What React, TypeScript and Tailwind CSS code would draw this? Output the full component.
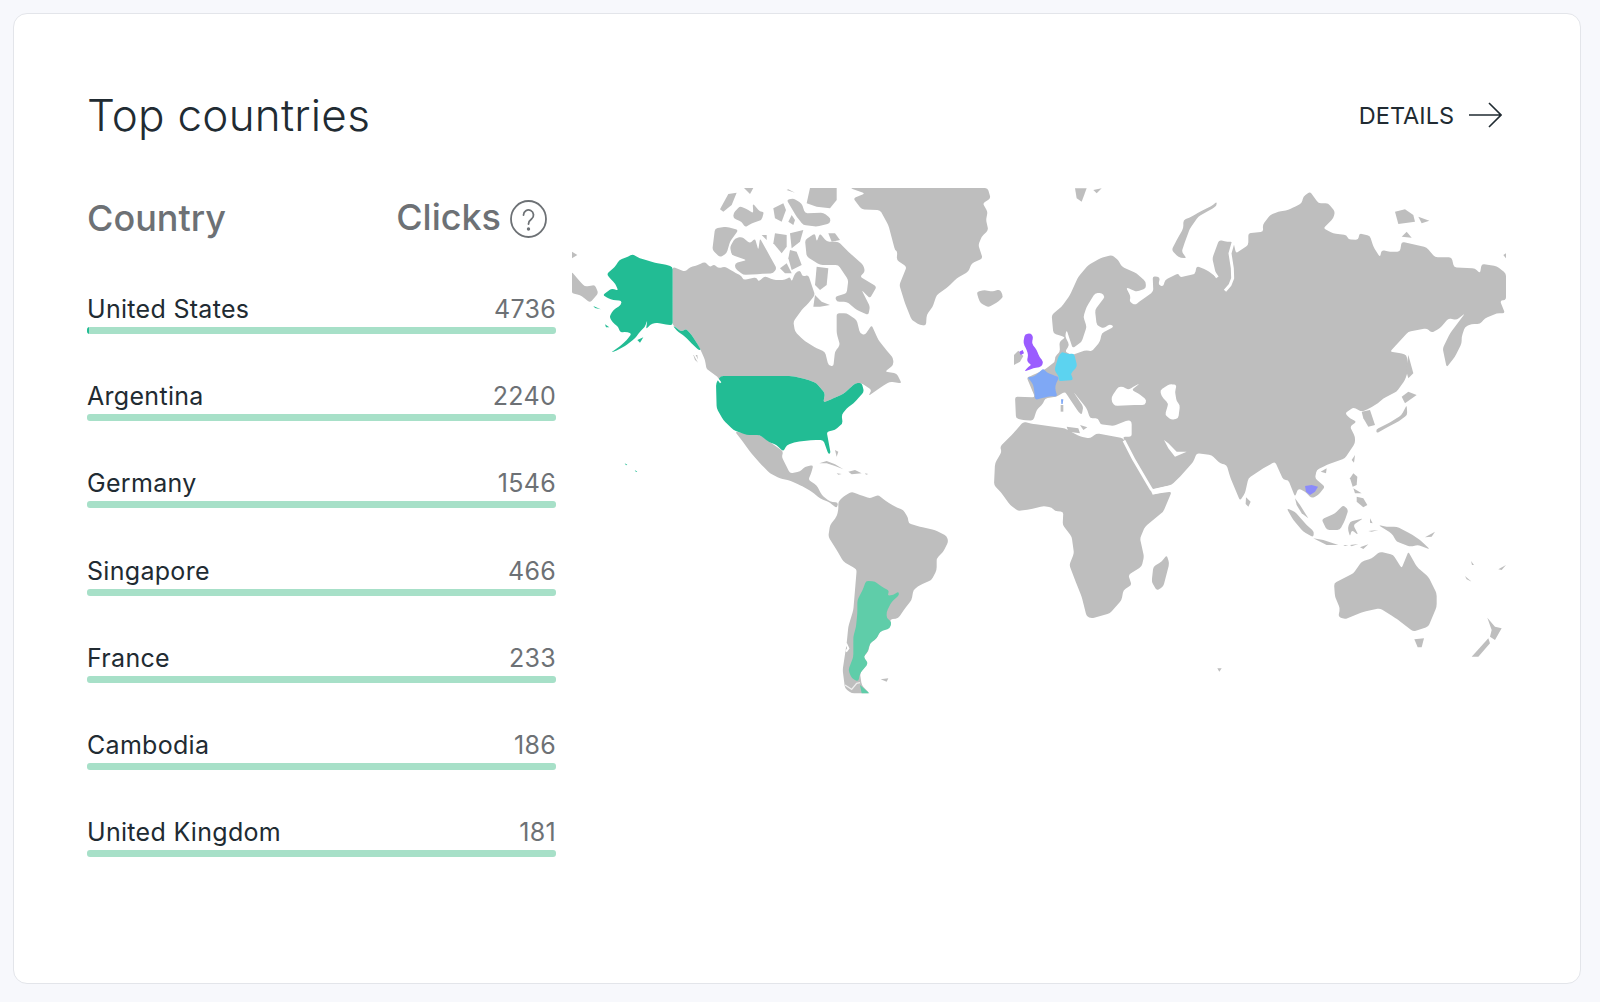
// App.tsx
const GRAY = '#bebebe';
const rows = [
	{ name: 'United States', clicks: 4736 },
	{ name: 'Argentina', clicks: 2240 },
	{ name: 'Germany', clicks: 1546 },
	{ name: 'Singapore', clicks: 466 },
	{ name: 'France', clicks: 233 },
	{ name: 'Cambodia', clicks: 186 },
	{ name: 'United Kingdom', clicks: 181 },
];

// Outline points are traced at 3x, in frames anchored on the page
const west = 'translate(560 170) scale(0.33333)';
const east = 'translate(1000 170) scale(0.33333)';
const south = 'translate(780 430) scale(0.33333)';
const oceania = 'translate(1180 430) scale(0.33333)';

const westGray = [
	'338,290 375,305 390,292 415,285 435,275 450,292 462,282 475,295 495,290 520,305 545,318 550,330 590,322 595,335 615,318 640,330 675,330 690,320 695,335 705,310 720,300 728,320 745,315 755,345 765,375 745,400 725,420 700,455 705,485 730,510 770,535 795,545 805,585 820,590 825,545 840,525 830,490 830,430 860,430 890,450 900,490 915,495 935,465 955,510 975,535 1000,565 1000,585 975,605 1010,610 1025,640 990,635 965,650 925,678 935,660 905,640 885,640 850,672 820,685 790,698 795,670 770,640 740,628 695,618 482,618 480,635 470,620 440,600 435,570 422,540 410,518 395,495 378,476 365,485 338,466',
	'400,555 412,555 415,578 405,570',
	'1250,365 1275,360 1295,365 1320,358 1330,380 1315,395 1285,412 1262,400 1255,385',
	'870,54 1283,54 1292,85 1268,100 1283,125 1278,150 1285,180 1265,200 1255,225 1268,265 1235,280 1225,305 1190,325 1165,350 1130,375 1118,410 1100,435 1098,467 1080,465 1055,450 1035,400 1018,345 1040,290 1010,270 1012,245 1005,240 985,165 960,120 905,118 880,85 915,70',
	'480,118 505,72 530,68 515,105 490,125',
	'552,54 580,54 570,72',
	'685,58 705,68 680,60',
	'750,54 830,54 830,90 810,115 770,110 740,100',
	'520,130 540,108 565,120 580,130 578,100 600,125 612,125 605,150 575,160 555,172 545,155 520,145',
	'640,115 670,100 678,120 665,155 645,145',
	'680,90 700,85 725,100 735,130 790,128 812,145 810,160 770,170 730,165 710,140',
	'685,155 695,135 705,150 700,165',
	'465,175 500,170 535,180 510,215 500,250 480,262 457,240',
	'510,230 525,205 545,200 570,220 585,205 595,240 600,205 625,250 650,295 640,310 600,312 550,315 525,295 525,280 560,270 515,255',
	'605,195 620,195 620,210',
	'645,190 680,195 680,230 665,250 640,220',
	'690,190 730,180 720,215 695,235',
	'690,240 710,245 725,285 695,300 685,265',
	'660,295 680,280 695,310 675,310',
	'735,210 765,190 770,215 780,190 800,215 835,215 870,250 910,285 915,305 900,320 950,350 930,385 905,360 930,410 925,435 890,420 860,395 830,395 825,380 860,370 865,330 835,285 780,285 740,260',
	'805,190 825,190 840,210 815,215',
	'770,290 805,295 800,345 780,360 765,345',
	'765,375 785,395 810,405 780,410 760,410',
	'35,245 52,255 35,265',
	'35,305 60,335 75,350 105,345 115,370 90,398 60,375 35,370',
];
const westWhite = ['835,330 850,320 852,340 838,345'];
const westGreen = [
	'338,290 318,284 285,278 250,268 232,262 218,252 205,260 178,270 165,290 140,312 150,325 165,340 175,362 155,355 128,375 145,385 160,390 185,392 183,405 160,420 148,440 158,458 175,470 180,488 195,485 215,490 205,505 185,525 152,548 170,542 195,528 225,505 240,485 255,470 262,450 258,478 270,465 285,458 310,462 338,466',
	'338,466 365,485 378,476 395,495 410,518 423,540 415,540 395,520 375,500 350,482',
	'482,618 695,618 740,628 770,640 795,670 790,698 820,685 850,672 885,640 905,638 912,665 890,690 880,700 860,715 845,735 848,760 825,780 800,785 812,850 805,852 790,810 760,810 710,815 680,825 670,845 650,825 625,815 600,795 560,795 520,780 490,750 470,715 468,640',
	'100,408 122,418 105,414',
	'135,463 148,472 138,472',
	'232,510 250,502 240,518',
	'194,880 202,884 198,886',
	'224,900 232,905 228,906',
];

const southGray = [
	'-135,5 -60,15 10,65 5,80 15,100 30,130 60,125 75,110 100,105 95,125 85,150 110,165 125,195 150,215 175,218 170,235 150,218 120,205 95,185 60,165 30,152 0,145 -30,130 -60,100 -90,65 -115,30',
	'118,100 140,93 165,103 190,118 165,108 140,100',
	'205,125 225,120 245,130 215,133',
	'255,130 265,132 258,134',
	'170,130 185,132 175,134',
	'165,60 175,65 170,80',
	'175,215 190,200 215,185 240,195 270,205 295,195 320,215 345,230 370,240 385,265 385,280 420,290 465,300 500,318 505,335 490,365 470,385 470,420 455,450 420,465 400,480 395,510 375,535 355,565 330,568 332,590 300,605 290,625 270,640 265,665 250,680 262,700 240,730 245,765 268,790 215,790 195,775 188,720 200,640 205,590 220,540 230,420 225,415 190,395 170,360 145,320 150,285 170,260 175,240',
	'302,748 325,745 320,755',
	'660,50 700,10 730,-25 760,-18 855,-5 900,20 930,25 950,10 1030,25 1060,85 1112,178 1120,192 1175,185 1150,245 1095,290 1080,325 1092,380 1085,410 1045,435 1055,465 1030,480 1025,510 990,550 935,565 920,560 905,500 885,450 868,405 882,370 875,320 848,285 850,245 825,243 815,232 790,228 750,238 715,243 690,225 665,190 642,165 645,100 665,65',
	'1160,375 1168,400 1150,470 1130,482 1115,455 1120,410 1145,395',
];
const southWhite = [
	'1152,30 1165,55 1185,80 1220,65 1190,65 1165,40',
	'1112,180 1175,165 1175,180 1118,194',
];

const eastGray = [
	'155,435 185,410 210,375 235,320 265,285 300,265 335,255 355,270 365,290 410,310 437,335 438,355 410,365 378,352 392,380 388,395 405,405 425,390 460,365 458,318 480,322 475,345 490,350 495,330 535,310 540,322 585,312 590,288 620,300 650,322 637,265 657,210 682,215 700,215 708,250 745,225 745,190 790,185 788,165 810,135 835,125 865,120 885,110 905,100 910,80 930,65 945,85 955,100 985,100 1005,125 1000,145 970,175 1000,190 1040,195 1045,208 1075,210 1078,190 1110,198 1120,230 1140,262 1145,240 1170,245 1200,245 1205,215 1280,232 1305,262 1355,262 1362,292 1425,295 1440,310 1445,282 1490,288 1518,310 1518,390 1500,392 1515,430 1490,430 1455,445 1440,462 1415,462 1395,470 1385,500 1385,520 1365,560 1340,592 1328,535 1350,490 1395,430 1370,450 1345,445 1320,475 1295,488 1280,475 1225,485 1170,545 1205,550 1220,555 1225,600 1215,630 1190,665 1150,685 1140,695 1110,715 1085,725 1060,712 1035,730 1050,745 1070,755 1050,770 1065,800 1065,820 1035,865 980,885 950,900 945,925 975,950 955,975 935,985 915,965 895,955 885,980 865,930 850,930 825,875 790,895 745,925 735,970 720,992 690,920 680,885 660,880 635,855 590,850 580,875 540,920 515,945 455,958 400,860 368,800 395,800 395,755 385,750 340,768 300,762 295,745 270,745 260,715 220,665 250,710 245,735 235,725 205,680 195,665 170,680 135,685 130,700 110,720 100,752 70,750 48,745 45,680 105,682 80,622 100,615 135,598 165,575 165,560 180,545 178,515 195,503 190,500 160,490',
	'650,95 640,105 600,125 575,140 550,150 550,175 530,210 515,240 535,262 560,265 545,245 555,215 570,175 595,140 630,120 650,108',
	'225,55 260,55 245,95 230,85',
	'280,60 305,55 290,70',
	'1185,125 1215,118 1240,135 1245,155 1195,162',
	'1255,140 1288,152 1265,160',
	'1205,200 1220,185 1235,203',
	'1510,255 1518,250 1518,265',
	'55,542 70,558 60,575 42,585 42,555',
	'182,705 190,705 190,725 182,725',
	'1220,705 1222,735 1195,755 1165,770 1130,790 1128,778 1165,760 1205,735',
	'1205,680 1225,665 1250,675 1215,700',
	'1225,555 1240,610 1225,625 1218,600',
	'1085,725 1110,720 1125,765 1105,770 1090,745',
	'240,765 262,772 250,780',
	'200,770 235,775 240,790 205,785',
];
const eastWhite = [
	'200,480 218,535 245,515 260,470 250,440 260,410 285,370 305,368 315,380 285,420 290,465 310,475 330,462 342,470 305,490 300,515 275,545 260,540 215,555 195,545 208,525 195,498',
	'335,680 355,650 370,650 385,660 400,650 420,640 395,660 415,670 440,690 435,705 395,705 345,708 335,695',
	'480,660 510,642 530,645 525,665 530,695 540,705 535,745 515,750 495,735 505,700 485,680',
];
const eastInlets = [
	'700,215 690,250 697,295 698,325 690,345 675,362',
	'652,322 637,300',
	'372,812 400,866 455,960',
];

const oceaniaGray = [
	'198,202 212,215 205,230 197,222',
	'345,205 360,225 385,265 365,250 350,225',
	'320,235 345,245 380,285 402,305 400,322 370,305 340,270',
	'400,325 430,330 475,345 440,345',
	'425,268 465,250 490,225 505,240 495,270 480,300 440,300',
	'510,275 550,265 520,285 535,315 515,300 510,320 503,295',
	'510,145 520,130 532,140 530,165 518,170',
	'530,200 550,205 562,225 550,232 530,215',
	'520,175 545,190 525,190',
	'515,90 525,75 522,98',
	'422,125 440,115 438,130',
	'595,285 620,290 650,290 690,310 720,330 750,358 715,345 690,350 650,335 635,310',
	'735,322 765,305 755,320',
	'490,345 505,345 495,348',
	'510,345 535,342 515,349',
	'540,352 565,343 550,357',
	'570,265 578,280 570,278',
	'565,303 595,300 575,305',
	'462,460 520,430 545,395 575,385 600,365 640,375 665,415 685,365 710,410 745,440 770,490 770,530 745,590 700,605 655,570 640,560 600,535 550,545 495,568 475,560 480,535 465,500',
	'703,628 732,625 725,652 713,652',
	'922,563 945,590 965,595 945,630 930,620 935,600',
	'925,625 930,640 895,680 875,680',
	'112,715 125,715 118,725',
	'855,438 875,455 860,448',
	'955,418 978,405 965,420',
	'873,393 882,405 876,405',
];

const argentina = [
	'258,452 285,455 305,470 328,482 322,497 340,495 355,484 358,495 335,515 320,545 320,565 335,575 330,595 300,605 290,625 270,640 262,668 250,680 265,700 240,730 235,755 215,745 205,720 220,680 220,620 228,590 232,550 232,510 248,480',
	'240,765 268,790 245,790',
];

// big outlines get their corners softened, tiny islands stay as they are
function Land({ points, fill }: { points: string; fill?: string }) {
	const pts = points.split(' ').map((p) => p.split(',').map(Number));
	if (pts.length < 7) return <polygon points={points} fill={fill} />;
	const cut = (a: number[], b: number[]) => {
		const d = Math.hypot(b[0] - a[0], b[1] - a[1]);
		const t = Math.min(8, d / 2) / d;
		return `${a[0] + (b[0] - a[0]) * t},${a[1] + (b[1] - a[1]) * t}`;
	};
	const d = pts
		.map((p, i) => {
			const prev = pts[(i + pts.length - 1) % pts.length];
			const next = pts[(i + 1) % pts.length];
			return `${i ? 'L' : 'M'}${cut(p, prev)}Q${p[0]},${p[1]} ${cut(p, next)}`;
		})
		.join('');
	return <path d={`${d}Z`} fill={fill} />;
}

function WorldMap() {
	return (
		<svg viewBox="572 188 935 506" className="ml-4 h-[506px] w-[935px] shrink-0">
			<g transform={west} fill={GRAY}>
				{westGray.map((p) => <Land key={p} points={p} />)}
				{westWhite.map((p) => <polygon key={p} points={p} fill="#fff" />)}
			</g>
			<g transform={south} fill={GRAY}>
				{southGray.map((p) => <Land key={p} points={p} />)}
			</g>
			<g transform={east} fill={GRAY}>
				{eastGray.map((p) => <Land key={p} points={p} />)}
				{eastWhite.map((p) => <Land key={p} points={p} fill="#fff" />)}
				{eastInlets.map((p) => <polyline key={p} points={p} fill="none" stroke="#fff" strokeWidth="9" />)}
			</g>
			<g transform={south} fill="#fff">
				{southWhite.map((p) => <polygon key={p} points={p} />)}
				<polyline points="195,765 215,778 230,760 240,758" fill="none" stroke="#eee" strokeWidth="4" />
				<polyline points="198,640 205,655 198,665" fill="none" stroke="#fff" strokeWidth="6" />
			</g>
			<g transform={oceania} fill={GRAY}>
				{oceaniaGray.map((p) => <Land key={p} points={p} />)}
			</g>
			<g transform={west} fill="#22bc94">
				{westGreen.map((p) => <Land key={p} points={p} />)}
				<polyline points="400,548 415,575 440,600 470,622 482,638" fill="none" stroke="#fff" strokeWidth="5" />
			</g>
			<g transform={south} fill="#5fcda9">
				{argentina.map((p) => <Land key={p} points={p} />)}
			</g>
			<g transform={east}>
				<Land fill="#9b5cff" points="75,492 92,490 100,500 95,520 110,540 118,560 130,575 125,590 100,595 72,605 85,590 95,585 80,575 85,555 80,540 70,520 72,505" />
				<polygon fill="#9b5cff" points="58,545 68,540 72,550 62,555" />
				<Land fill="#7fa8f5" points="130,595 140,608 165,617 178,622 168,640 165,655 172,680 150,678 135,682 105,690 103,665 100,645 90,630 82,622 100,620 108,615" />
				<polygon fill="#7fa8f5" points="183,688 190,688 188,702 184,702" />
				<Land fill="#5cd3f0" points="185,545 205,553 222,550 232,590 212,610 220,630 175,634 178,622 163,600 175,560" />
			</g>
			<g transform={oceania}>
				<polygon fill="#8b8bfb" points="375,168 395,165 414,170 405,185 390,195 378,185" />
			</g>
		</svg>
	);
}

export default function App() {
	return (
		<div className="h-[1002px] bg-[#f7f8fc] p-[13px] font-['Inter',sans-serif]">
			<section className="h-[971px] w-[1568px] rounded-[14px] border border-[#e3e5ea] bg-white pl-[73px] pr-[74px] pt-[74px]">
				<header className="flex h-[54px] items-center justify-between pr-[4px]">
					<h1 className="text-[44px] font-[350] leading-[54px] tracking-[0.25px] text-[#212b32]">Top countries</h1>
					<a className="flex items-center gap-[15px] text-[23.5px] font-normal text-[#212b32]">
						<span className="mt-[1px]">DETAILS</span>
						<svg width="33" height="26" viewBox="0 0 33 26" fill="none" stroke="#212b32" strokeWidth="1.6">
							<path d="M0 13H32M20 1L32 13L20 25" />
						</svg>
					</a>
				</header>
				<div className="mt-[46px] flex">
					<div className="w-[469px] shrink-0">
						<div className="flex h-[58px] items-center justify-between pr-[9px] text-[36px] font-[450] text-[#6d7175]">
							<span className="mt-[2px]">Country</span>
							<span className="flex items-center gap-[9px]">
								Clicks
								<svg width="37" height="38" viewBox="0 0 37 38" fill="none" stroke="#6d7175" strokeWidth="1.8" className="mt-[3px]">
									<ellipse cx="18.5" cy="19" rx="17.5" ry="18" />
									<path d="M13.5 15a5 5 0 1 1 8 4c-2 1.500-3 2.500-3 5" strokeLinecap="round" />
									<circle cx="18.500" cy="29" r="0.800" fill="#6d7175" />
								</svg>
							</span>
						</div>
						<ul className="mt-[26px] flex flex-col gap-[25.2px]">
							{rows.map((row) => (
								<li key={row.name}>
									<div className="flex h-[55px] items-end justify-between pb-[1px] text-[25px] font-normal leading-[34px] tracking-[0.3px]">
										<span className="text-[#212b32]">{row.name}</span>
										<span className="text-[#6d7175]">{row.clicks}</span>
									</div>
									<div className="h-[7px] overflow-hidden rounded-[3px] bg-[#a7e0c8]">
										{row.clicks === 4736 && <div className="h-full w-[2px] bg-[#22bc94]" />}
									</div>
								</li>
							))}
						</ul>
					</div>
					<WorldMap />
				</div>
			</section>
		</div>
	);
}
